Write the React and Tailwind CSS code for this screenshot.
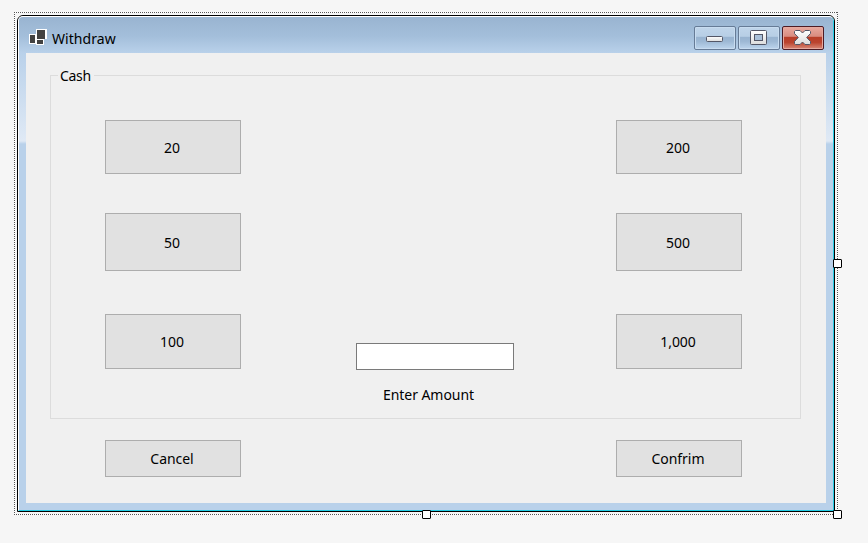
import React from 'react';

function CashButton({ className, children }) {
  return (
    <button className={`flex shrink-0 items-center justify-center border border-[#adadad] bg-[#e1e1e1] ${className}`}>
      <span className="mr-[2px] tracking-[-0.05px]">{children}</span>
    </button>
  );
}

function AppIcon() {
  return (
    <svg width="18" height="17" viewBox="0 0 18 17" shapeRendering="crispEdges" className="shrink-0">
      <path fill="#fff" d="M0 5h7v10H0zM7 0h11v10H7zM7 10h8v6H7z" />
      <path fill="#424242" d="M1 6h5v8H1zM8 1h8v9H8zM8 11h6v4H8z" />
    </svg>
  );
}

function CaptionButton({ kind }) {
  const close = kind === 'close';
  return (
    <button
      className={`h-6 w-[42px] rounded-[2px] border ${
        close
          ? 'border-[#4d1b24] bg-[linear-gradient(#e8a99f_0%,#d98c80_43%,#b83d28_44%,#bb432e_70%,#d98978_100%)] shadow-[inset_0_0_0_1px_#e5a99f]'
          : 'border-[#667b96] bg-[linear-gradient(#c0d5ea_0%,#b7cee5_43%,#98b3d0_44%,#9db8d4_65%,#bdd5ed_100%)] shadow-[inset_0_0_0_1px_#c8dcf0]'
      }`}
    >
      <svg width="40" height="22" viewBox="0 0 40 22" className="block">
        <defs>
          <linearGradient id="glyph" x1="0" y1="0" x2="0" y2="1">
            <stop offset="0" stopColor="#fff" />
            <stop offset="1" stopColor="#dcdcdc" />
          </linearGradient>
        </defs>
        {kind === 'min' && <rect x="11.5" y="9.5" width="16" height="5" rx="1" fill="url(#glyph)" stroke="#535666" />}
        {kind === 'max' && (
          <>
            <rect x="11.5" y="3.5" width="16" height="14" rx="1" fill="url(#glyph)" stroke="#535666" />
            <rect x="15.5" y="7.5" width="8" height="6" fill="#a9c0d9" stroke="#535666" />
          </>
        )}
        {close && (
          <path
            d="M12.5 3.5H17L19.5 6L22 3.5H26.5L27.5 4.5V6.5L23.7 10.5L27.5 14.5V16.5L26.5 17.5H22L19.5 15L17 17.5H12.5L11.5 16.5V14.5L15.3 10.5L11.5 6.5V4.5Z"
            fill="url(#glyph)"
            stroke="#535666"
            strokeLinejoin="round"
          />
        )}
      </svg>
    </button>
  );
}

function TitleBar() {
  return (
    <header className="flex h-[36px] shrink-0 bg-[linear-gradient(#99b4d1,#a4bfdb_55%,#b9d1ea)] pl-[10px] pr-[9px]">
      <div className="flex flex-1 pt-[12px]">
        <AppIcon />
        <h1 className="ml-[5px] mt-px text-[14px] leading-[18px] tracking-[0.05px]">Withdraw</h1>
      </div>
      <div className="flex gap-[2px] pt-[9px]">
        <CaptionButton kind="min" />
        <CaptionButton kind="max" />
        <CaptionButton kind="close" />
      </div>
    </header>
  );
}

function CashGroup() {
  return (
    <section className="flex h-[353px] w-[751px] flex-col">
      <div className="flex h-[10px] items-end">
        <div className="h-px w-[8px] bg-[#dcdcdc]" />
        <div className="relative top-[10px] w-[36px] pl-[2px] text-[14px] leading-[20px] tracking-[-0.3px]">Cash</div>
        <div className="h-px flex-1 bg-[#dcdcdc]" />
      </div>
      <div className="flex flex-1 justify-between border border-t-0 border-[#dcdcdc] pl-[54px] pr-[58px] pt-[44px]">
        <div className="flex w-[136px] flex-col">
          <CashButton className="h-[54px]">20</CashButton>
          <CashButton className="mt-[39px] h-[58px]">50</CashButton>
          <CashButton className="mt-[43px] h-[55px]">100</CashButton>
        </div>
        <div className="mr-[-13px] flex w-[158px] flex-col items-center pt-[223px]">
          <input aria-label="Enter Amount" className="h-[27px] w-[158px] border border-[#7a7a7a] bg-white outline-none" />
          <label className="mr-[13px] mt-[15px] whitespace-nowrap leading-5 tracking-[-0.05px]">Enter Amount</label>
        </div>
        <div className="flex w-[126px] flex-col">
          <CashButton className="h-[54px]">200</CashButton>
          <CashButton className="mt-[39px] h-[58px]">500</CashButton>
          <CashButton className="mt-[43px] h-[55px]">1,000</CashButton>
        </div>
      </div>
    </section>
  );
}

function Handle({ className }) {
  return <div className={`absolute size-[9px] rounded-[1px] border border-black bg-white ${className}`} />;
}

export default function App() {
  const dotsX = 'absolute h-px w-[824px] bg-[repeating-linear-gradient(90deg,#555_0_1px,#fff_1px_2px)]';
  const dotsY = 'absolute w-px h-[503px] bg-[repeating-linear-gradient(#555_0_1px,#fff_1px_2px)]';
  return (
    <main className="relative h-[543px] w-[868px] overflow-hidden bg-[#f6f6f6] pl-[17px] pt-[15px] font-['Noto_Sans','Open_Sans',sans-serif] text-[14px] text-black">
      <div className={`${dotsX} left-[14px] top-[12px]`} />
      <div className={`${dotsX} left-[14px] top-[514px]`} />
      <div className={`${dotsY} left-[14px] top-[12px]`} />
      <div className={`${dotsY} left-[837px] top-[12px]`} />
      <div className="h-[497px] w-[818px] overflow-hidden rounded-t-[6px] border border-black">
        <div className="flex h-[495px] flex-col overflow-hidden rounded-t-[5px] border border-b-[#22cde5] border-l-white border-r-[#22cde5] border-t-white bg-[#b9d1ea]">
          <TitleBar />
          <div className="flex-1 bg-[linear-gradient(#b9d1ea_0px,#dfe9f5_87px,#dfe9f5_88px,#b9d1ea_91px)] px-[7px] pb-[7px]">
            <div className="flex h-full flex-col bg-[#f0f0f0] pl-[24px] pt-[13px]">
              <CashGroup />
              <div className="mt-[21px] flex w-[692px] justify-between pl-[55px]">
                <CashButton className="h-[37px] w-[136px]">Cancel</CashButton>
                <CashButton className="h-[37px] w-[126px]">Confrim</CashButton>
              </div>
            </div>
          </div>
        </div>
      </div>
      <Handle className="left-[833px] top-[259px]" />
      <Handle className="left-[422px] top-[510px]" />
      <Handle className="left-[833px] top-[510px]" />
    </main>
  );
}
